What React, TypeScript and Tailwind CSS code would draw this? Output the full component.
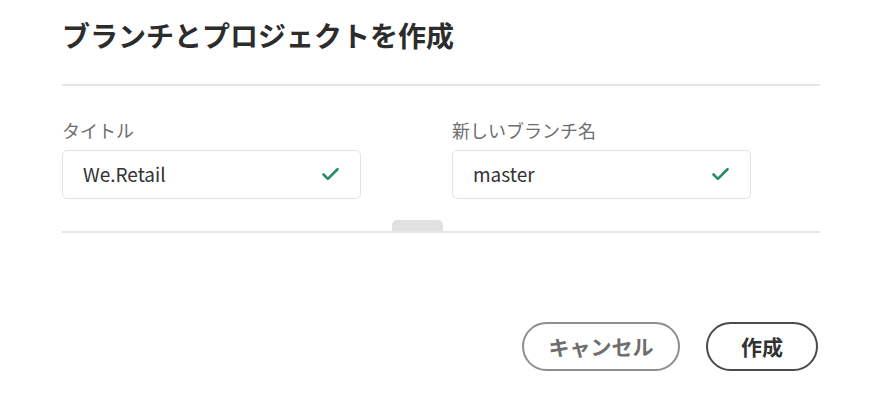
import { Check } from 'lucide-react';

const font = { fontFamily: '"Noto Sans CJK JP", "Noto Sans", sans-serif' };

function Field({ label, value }: { label: string; value: string }) {
  return (
    <div className="flex flex-col">
      <label className="text-[18px] leading-[26px] text-[#6e6e6e] mb-[7px]">{label}</label>
      <div className="w-[299px] h-[49px] border border-[#e3e3e3] rounded-[5px] flex items-center justify-between pl-[20px] pr-[19px]">
        <span className="text-[19px] text-[#323232]">{value}</span>
        <Check className="w-[21px] h-[21px] text-[#268e6c]" strokeWidth={3} aria-hidden="true" />
      </div>
    </div>
  );
}

export default function App() {
  return (
    <div className="w-[881px] h-[404px] bg-white" style={font}>
      <div className="w-[758px] ml-[62px] pt-[17px]">
        <h1 className="text-[28px] leading-[36px] font-bold text-[#2c2c2c]">
          ブランチとプロジェクトを作成
        </h1>

        <div className="h-[2px] bg-[#e6e6e6] mt-[31px]" />

        <div className="grid grid-cols-[390px_1fr] mt-[31px]">
          <Field label="タイトル" value="We.Retail" />
          <Field label="新しいブランチ名" value="master" />
        </div>

        {/* 区切り線 + つまみ */}
        <div className="relative mt-[32px]">
          <div className="absolute left-[330px] -top-[11px] w-[51px] h-[11px] bg-[#e1e1e1] rounded-t-[5px]" />
          <div className="h-[2px] bg-[#e6e6e6]" />
        </div>

        <div className="flex justify-end gap-[26px] mt-[89px] pr-[2px]">
          <button className="h-[49px] w-[158px] rounded-full border-2 border-[#8e8e8e] text-[21px] font-bold text-[#6e6e6e]">
            キャンセル
          </button>
          <button className="h-[49px] w-[112px] rounded-full border-2 border-[#4b4b4b] text-[21px] font-bold text-[#323232]">
            作成
          </button>
        </div>
      </div>
    </div>
  );
}
